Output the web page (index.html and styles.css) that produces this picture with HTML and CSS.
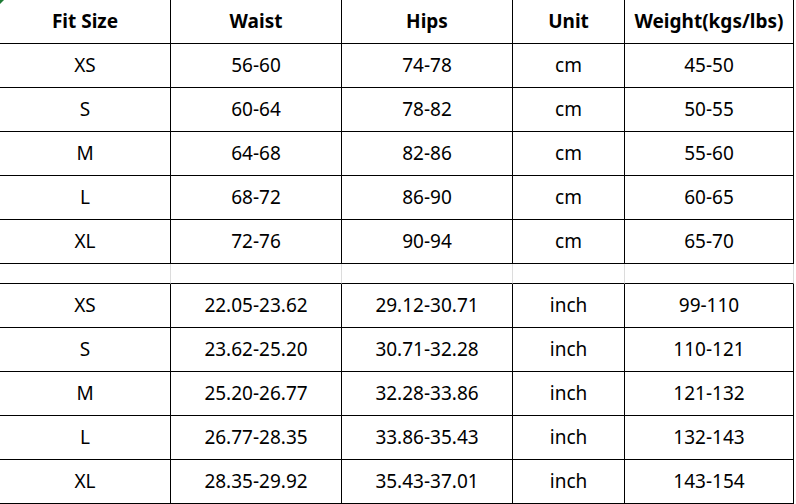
FILE: index.html
```html
<!DOCTYPE html>
<html>
<head>
<meta charset="utf-8">
<link rel="stylesheet" href="styles.css">
</head>
<body>
<div class="sheet">
  <span class="corner"></span>
  <div class="grid">
    <div class="cell head">Fit Size</div><div class="cell head">Waist</div><div class="cell head">Hips</div><div class="cell head">Unit</div><div class="cell head">Weight(kgs/lbs)</div>
    <div class="cell">XS</div><div class="cell">56-60</div><div class="cell">74-78</div><div class="cell">cm</div><div class="cell">45-50</div>
    <div class="cell">S</div><div class="cell">60-64</div><div class="cell">78-82</div><div class="cell">cm</div><div class="cell">50-55</div>
    <div class="cell">M</div><div class="cell">64-68</div><div class="cell">82-86</div><div class="cell">cm</div><div class="cell">55-60</div>
    <div class="cell">L</div><div class="cell">68-72</div><div class="cell">86-90</div><div class="cell">cm</div><div class="cell">60-65</div>
    <div class="cell">XL</div><div class="cell">72-76</div><div class="cell">90-94</div><div class="cell">cm</div><div class="cell">65-70</div>
    <div class="cell gap"></div><div class="cell gap"></div><div class="cell gap"></div><div class="cell gap"></div><div class="cell gap"></div>
    <div class="cell">XS</div><div class="cell">22.05-23.62</div><div class="cell">29.12-30.71</div><div class="cell">inch</div><div class="cell">99-110</div>
    <div class="cell">S</div><div class="cell">23.62-25.20</div><div class="cell">30.71-32.28</div><div class="cell">inch</div><div class="cell">110-121</div>
    <div class="cell">M</div><div class="cell">25.20-26.77</div><div class="cell">32.28-33.86</div><div class="cell">inch</div><div class="cell">121-132</div>
    <div class="cell">L</div><div class="cell">26.77-28.35</div><div class="cell">33.86-35.43</div><div class="cell">inch</div><div class="cell">132-143</div>
    <div class="cell">XL</div><div class="cell">28.35-29.92</div><div class="cell">35.43-37.01</div><div class="cell">inch</div><div class="cell">143-154</div>
  </div>
</div>
</body>
</html>
```
FILE: styles.css
```css
html, body {
  margin: 0;
  padding: 0;
  background: #fff;
}
.sheet {
  position: relative;
  width: 796px;
  height: 504px;
  overflow: hidden;
}
.corner {
  position: absolute;
  left: 0;
  top: 0;
  width: 0;
  height: 0;
  border-top: 4px solid #1e7b34;
  border-right: 4px solid transparent;
}
.grid {
  display: grid;
  grid-template-columns: 171px 171px 171px 112px 169px;
  grid-template-rows: 44px repeat(5, 44px) 20px repeat(5, 44px);
  font-family: "Noto Sans", "Open Sans", sans-serif;
  font-size: 19px;
  color: #000;
}
.cell {
  box-sizing: border-box;
  border-right: 1px solid #000;
  border-bottom: 1px solid #000;
  display: flex;
  align-items: center;
  justify-content: center;
  white-space: nowrap;
  padding-bottom: 1px;
}
.head {
  font-weight: 700;
}
.gap {
  border-right-color: #dcdcdc;
}
```
